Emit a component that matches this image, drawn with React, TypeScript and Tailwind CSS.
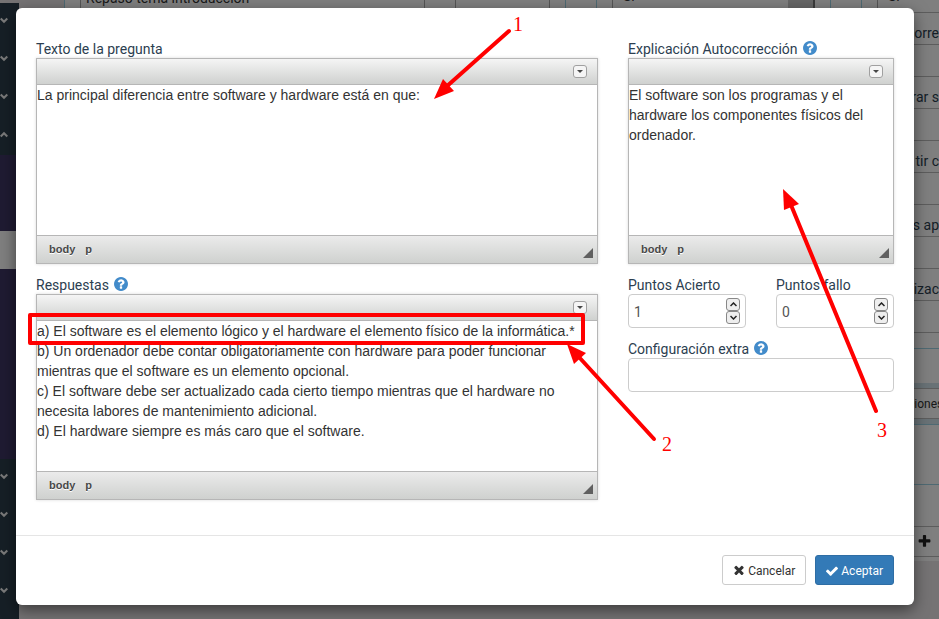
import React, { useState } from "react";

const sideLabels = ["corre", "rar s", "tir c", "os ap", "lizac"];

const SidebarItem = ({ up = false }: { up?: boolean }) => (
  <li className="h-[38px] flex items-center justify-end pr-[11px] pb-[3px]">
    <svg width="12" height="9" viewBox="0 0 12 9" fill="none" stroke="#f4f4f4" strokeWidth="3.2">
      <path d={up ? "M1 7.500L6 2.500L11 7.500" : "M1 1.500L6 6.500L11 1.500"} />
    </svg>
  </li>
);

const Sidebar = () => (
  <nav className="w-[19px] shrink-0 mt-[3px] bg-[#2c3f4c] overflow-hidden">
    <ul>
      <SidebarItem />
      <SidebarItem />
      <SidebarItem />
      <SidebarItem up />
      <li className="h-[76px] bg-[#3e3664]" />
      <li className="h-[38px] bg-white" />
      <li className="h-[190px] bg-[#3e3664]" />
      <SidebarItem />
      <SidebarItem />
      <SidebarItem />
      <SidebarItem />
    </ul>
  </nav>
);

const CheckIcon = () => (
  <svg width="12" height="14" viewBox="121 0 1550 1792" fill="currentColor">
    <path d="M1671 566q0 40-28 68l-724 724-136 136q-28 28-68 28t-68-28l-136-136-362-362q-28-28-28-68t28-68l136-136q28-28 68-28t68 28l294 295 656-657q28-28 68-28t68 28l136 136q28 28 28 68z" />
  </svg>
);

const TimesIcon = () => (
  <svg width="12" height="14" viewBox="128 132 1536 1792" fill="currentColor">
    <path d="M1490 1322q0 40-28 68l-136 136q-28 28-68 28t-68-28l-294-294-294 294q-28 28-68 28t-68-28l-136-136q-28-28-28-68t28-68l294-294-294-294q-28-28-28-68t28-68l136-136q28-28 68-28t68 28l294 294 294-294q28-28 68-28t68 28l136 136q28 28 28 68t-28 68l-294 294 294 294q28 28 28 68z" />
  </svg>
);

const PlusIcon = () => (
  <svg width="15" height="15" viewBox="0 0 1792 1792" fill="currentColor">
    <path d="M1600 736v192q0 40-28 68t-68 28h-416v416q0 40-28 68t-68 28h-192q-40 0-68-28t-28-68v-416h-416q-40 0-68-28t-28-68v-192q0-40 28-68t68-28h416v-416q0-40 28-68t68-28h192q40 0 68 28t28 68v416h416q40 0 68 28t28 68z" />
  </svg>
);

const HelpIcon = () => (
  <svg width="14" height="14" viewBox="128 128 1536 1536" fill="#428bca" className="mt-[3px]">
    <path d="M1024 1376v-192q0-14-9-23t-23-9h-192q-14 0-23 9t-9 23v192q0 14 9 23t23 9h192q14 0 23-9t9-23zm256-672q0-88-55.500-163t-138.500-116-170-41q-243 0-371 213-15 24 8 42l132 100q7 6 19 6 16 0 25-12 53-68 86-92 34-24 86-24 48 0 85.500 26t37.500 59q0 38-20 61t-68 45q-63 28-115.500 86.500t-52.500 125.500v36q0 14 9 23t23 9h192q14 0 23-9t9-23q0-19 21.500-49.500t54.500-49.500q32-18 49-28.500t46-35 44.500-48 28-60.500 12.500-81zm384 192q0 209-103 385.500t-279.500 279.500-385.500 103-385.500-103-279.500-279.500-103-385.500 103-385.500 279.500-279.500 385.500-103 385.500 103 279.500 279.500 103 385.500z" />
  </svg>
);

const StepIcon = ({ up = false }: { up?: boolean }) => (
  <svg width="7" height="5" viewBox="0 0 7 5" fill="none" stroke="#222" strokeWidth="1.5">
    <path d={up ? "M0.500 4L3.500 1L6.500 4" : "M0.500 1L3.500 4L6.500 1"} />
  </svg>
);

const BackgroundPage = () => (
  <div
    aria-hidden="true"
    className="absolute inset-0 flex overflow-hidden bg-[#ebe6e8] font-['Roboto',sans-serif] text-[14px] text-[#2c3e50]"
  >
    <Sidebar />
    <div className="w-[45px] shrink-0" />
    <div className="flex-1 h-[561px] bg-white border-l border-[#9fd4e6] flex flex-col">
      <div className="flex h-3 shrink-0 items-end leading-6 text-[#333]">
        <div className="w-[15px] shrink-0" />
        <div className="w-[345px] h-3 border-x border-[#aaa] px-[5px] flex items-end pb-[2px] whitespace-nowrap">
          Repaso tema introducción
        </div>
        <div className="w-[31px] h-3 border-r border-[#aaa]" />
        <div className="w-[94px] h-3 border-r border-[#aaa]" />
        <div className="w-4 h-3 border-r border-[#9fd4e6]" />
        <div className="w-[31px] h-3 border-r border-[#9fd4e6]" />
        <div className="w-4 h-3 border-r border-[#aaa]" />
        <div className="w-[175px] h-3 px-[10px] flex items-end pb-1">Sí</div>
        <div className="w-[27px] h-3 bg-[#ccc] border-r-2 border-[#777]" />
        <div className="w-4 h-3 border-r border-[#9fd4e6]" />
        <div className="w-[31px] h-3 border-r border-[#9fd4e6]" />
        <div className="w-4 h-3 border-r border-[#aaa]" />
        <div className="flex-1 h-3 px-[10px] flex items-end pb-1">Sí</div>
      </div>
      <div className="self-end w-[31px] flex flex-col">
        {sideLabels.map((label) => (
          <div key={label} className="h-16 border-t border-[#bbb]">
            <div className="h-8 pt-[10px] leading-5 border-b border-[#bbb] flex justify-end whitespace-nowrap">
              {label}
            </div>
          </div>
        ))}
        <div className="h-4 border-t border-[#bbb]" />
        <div className="h-[35px] border-t border-[#9fd4e6]" />
        <div className="h-[42px] py-[5px] bg-[#d3e4ec] border-b border-[#9fd4e6]">
          <div className="h-[31px] border-y border-[#bbb] bg-white flex items-center text-[12px] text-[#333]">ciones</div>
        </div>
        <div className="h-[60px] border-b border-[#9fd4e6]" />
        <div className="h-[41px]" />
        <div className="h-[31px] border-y border-[#bbb] flex items-center justify-center pl-[2px] text-[#222]">
          <PlusIcon />
        </div>
      </div>
    </div>
  </div>
);

type EditorProps = {
  id: string;
  label: string;
  help?: boolean;
  defaultValue: string;
};

const Editor = ({ id, label, help, defaultValue }: EditorProps) => {
  const [open, setOpen] = useState(false);

  return (
    <div>
      <label htmlFor={id} className="flex items-start gap-[5px] h-5 leading-[22px]">
        {label}
        {help && <HelpIcon />}
      </label>
      <div className="border border-[#b6b6b6] shadow-[0_0_3px_rgba(0,0,0,0.15)]">
        <div className="h-[26px] flex items-center justify-end pr-[10px] border-b border-[#b6b6b6] bg-linear-to-b from-[#f5f5f5] to-[#cfd1cf]">
          <button
            type="button"
            aria-label="Barra de herramientas"
            aria-expanded={open}
            onClick={() => setOpen(!open)}
            className="w-[14px] h-[13px] flex items-center justify-center rounded-[3px] border border-[#a0a0a0] bg-[#f5f5f5]"
          >
            <svg width="6" height="3" viewBox="0 0 6 3">
              <path d="M0 0h6L3 3z" fill="#474747" />
            </svg>
          </button>
        </div>
        <textarea
          id={id}
          defaultValue={defaultValue}
          className="block w-full h-[150px] resize-none outline-none bg-white font-['Liberation_Sans',sans-serif] text-[14px] leading-5 text-[#333]"
        />
        <div className="h-7 flex items-center justify-between pl-3 pr-1 border-t border-[#b6b6b6] bg-linear-to-b from-[#ebebeb] to-[#cfd1cf]">
          <div className="flex gap-[10px] font-['Liberation_Sans',sans-serif] font-bold text-[11px] text-[#484848] [text-shadow:0_1px_0_#fff]">
            <span>body</span>
            <span>p</span>
          </div>
          <svg width="10" height="10" viewBox="0 0 10 10" className="mt-[6px]">
            <path d="M10 0v10H0z" fill="#606060" />
          </svg>
        </div>
      </div>
    </div>
  );
};

const NumberField = ({ id, label, initial }: { id: string; label: string; initial: number }) => {
  const [value, setValue] = useState(initial);
  const stepClass = "w-[14px] h-[13px] flex items-center justify-center rounded-[3px] border border-[#888] bg-[#eee]";

  return (
    <div className="flex-1 min-w-0">
      <label htmlFor={id} className="block h-5 leading-[22px]">
        {label}
      </label>
      <div className="h-[34px] flex items-center rounded-[4px] border border-[#ccc] px-[5px]">
        <input
          id={id}
          inputMode="numeric"
          value={value}
          onChange={(e) => setValue(Number(e.target.value) || 0)}
          className="w-full min-w-0 pt-[2px] outline-none text-[14px] text-[#555]"
        />
        <div className="shrink-0 flex flex-col">
          <button type="button" aria-label="Subir" className={stepClass} onClick={() => setValue(value + 1)}>
            <StepIcon up />
          </button>
          <button type="button" aria-label="Bajar" className={stepClass} onClick={() => setValue(value - 1)}>
            <StepIcon />
          </button>
        </div>
      </div>
    </div>
  );
};

// Red marks drawn over the dialog
const Annotations = () => (
  <svg width="939" height="619" viewBox="0 0 939 619" className="absolute left-0 top-0 pointer-events-none">
    <g stroke="#f00" strokeWidth="4" strokeLinecap="round" fill="none">
      <rect x="30" y="315" width="553" height="28" strokeLinejoin="round" />
      <path d="M509 31L446 87" />
      <path d="M654 439L578 356" />
      <path d="M876 411L791 205" />
    </g>
    <g fill="#f00">
      <path d="M434 99L443 79L454 91z" />
      <path d="M567 344L586 353L574 364z" />
      <path d="M783 189L799 204L784 210z" />
    </g>
    <g fill="#f00" fontFamily="Liberation Serif, serif" fontSize="20">
      <text x="513" y="31">1</text>
      <text x="662" y="451">2</text>
      <text x="877" y="437">3</text>
    </g>
  </svg>
);

const answers = `a) El software es el elemento lógico y el hardware el elemento físico de la informática.*
b) Un ordenador debe contar obligatoriamente con hardware para poder funcionar mientras que el software es un elemento opcional.
c) El software debe ser actualizado cada cierto tiempo mientras que el hardware no necesita labores de mantenimiento adicional.
d) El hardware siempre es más caro que el software.`;

export default function App() {
  return (
    <div className="relative min-h-screen overflow-hidden">
      <BackgroundPage />
      <div className="absolute inset-0 bg-black/50" />
      <div className="relative pt-2 pb-[14px] pl-4 pr-[25px]">
        <div
          role="dialog"
          aria-modal="true"
          className="rounded-[6px] bg-white shadow-[0_5px_15px_rgba(0,0,0,0.5)] font-['Roboto',sans-serif] text-[14px] text-[#2c3e50]"
        >
          <div className="flex gap-[30px] px-5 pt-[30px] pb-[35px]">
            <div className="flex-1 min-w-0 flex flex-col gap-[10px]">
              <Editor
                id="question"
                label="Texto de la pregunta"
                defaultValue="La principal diferencia entre software y hardware está en que:"
              />
              <Editor id="answers" label="Respuestas" help defaultValue={answers} />
            </div>
            <div className="w-[266px] shrink-0 flex flex-col gap-[10px]">
              <Editor
                id="explanation"
                label="Explicación Autocorrección"
                help
                defaultValue="El software son los programas y el hardware los componentes físicos del ordenador."
              />
              <div className="flex gap-[30px]">
                <NumberField id="hit" label="Puntos Acierto" initial={1} />
                <NumberField id="miss" label="Puntos fallo" initial={0} />
              </div>
              <div>
                <label htmlFor="extra" className="flex items-start gap-[5px] h-5 leading-[22px]">
                  Configuración extra
                  <HelpIcon />
                </label>
                <input
                  id="extra"
                  type="text"
                  className="block w-full h-[34px] rounded-[4px] border border-[#ccc] px-3 outline-none"
                />
              </div>
            </div>
          </div>
          <div className="flex justify-end gap-[9px] px-5 pt-[19px] pb-5 border-t border-[#e5e5e5] text-[12px]">
            <button
              type="button"
              className="h-[30px] flex items-center gap-[3px] px-[10px] pt-[2px] rounded-[3px] border border-[#ccc] bg-white text-[#333]"
            >
              <TimesIcon />
              Cancelar
            </button>
            <button
              type="button"
              className="h-[30px] flex items-center gap-[3px] px-[10px] pt-[2px] rounded-[3px] border border-[#2e6da4] bg-[#337ab7] text-white"
            >
              <CheckIcon />
              Aceptar
            </button>
          </div>
        </div>
      </div>
      <Annotations />
    </div>
  );
}
